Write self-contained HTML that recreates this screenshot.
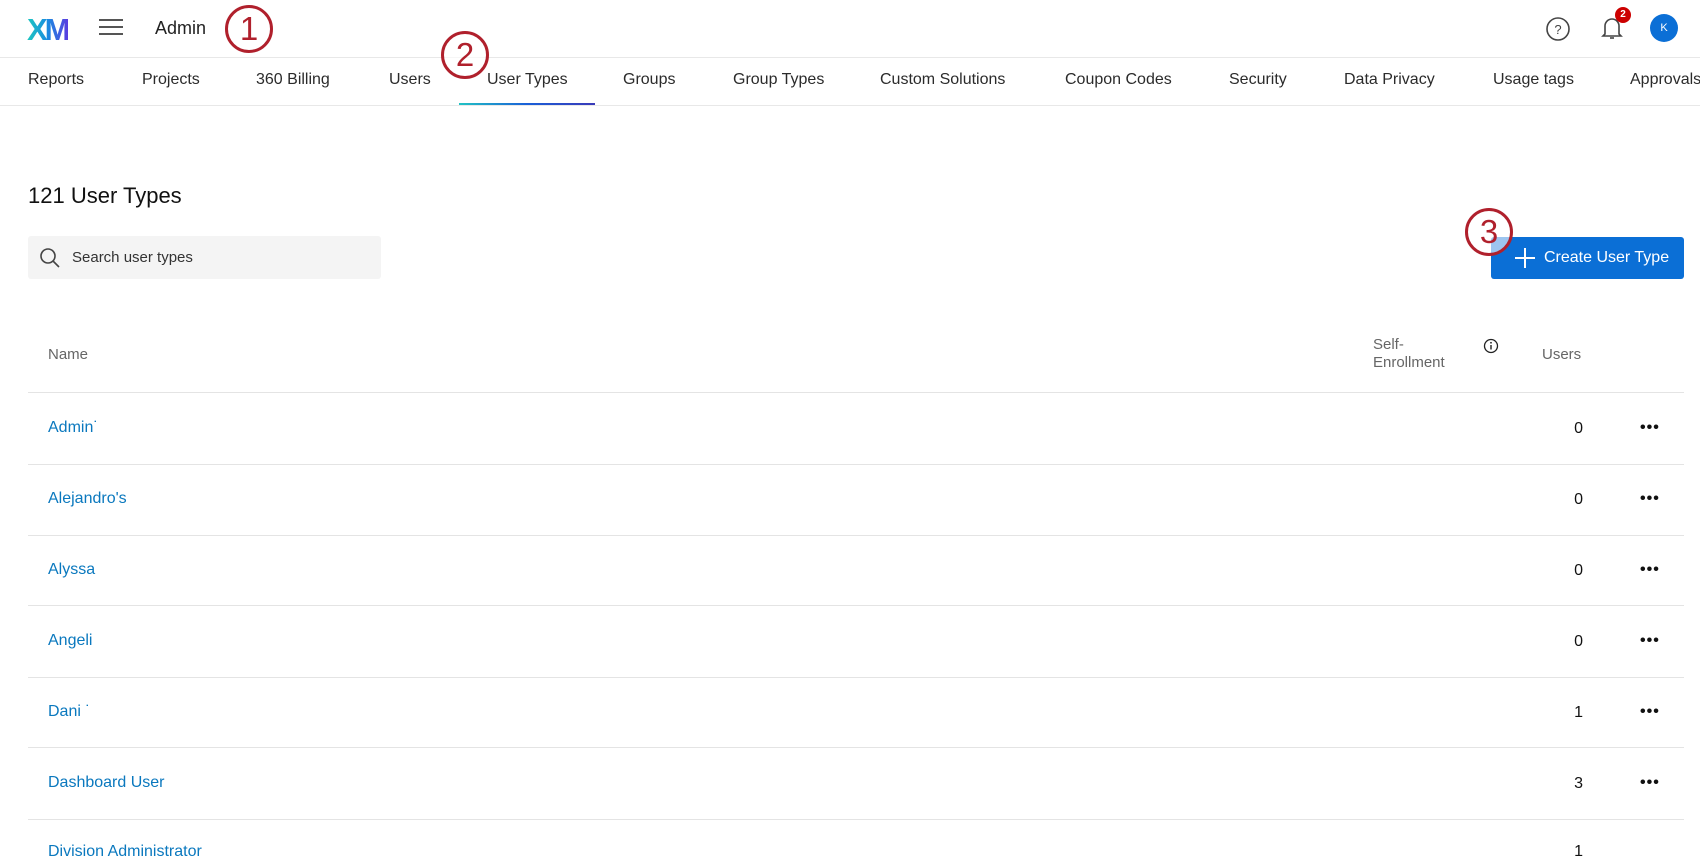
<!DOCTYPE html>
<html><head><meta charset="utf-8"><style>
*{margin:0;padding:0;box-sizing:border-box}
body{width:1700px;height:850px;overflow:hidden;background:#fff;font-family:"Liberation Sans",sans-serif;color:#1f1f1f;position:relative}
.a{position:absolute;white-space:nowrap}
.tab{position:absolute;top:71px;font-size:16px;color:#2b2b2b}
.hl{position:absolute;left:28px;width:1656px;height:1px;background:#e4e4e4}
.nm{position:absolute;left:48px;font-size:16px;color:#0a78be}
.num{position:absolute;right:117px;font-size:16px;color:#111}
.dots{position:absolute;left:1640px;font-size:16px;font-weight:bold;letter-spacing:1px;color:#111}
.circ{position:absolute;width:48px;height:48px;border:3px solid #b0202c;border-radius:50%;color:#b0202c;font-size:33px;text-align:center;line-height:42px;background:rgba(255,255,255,.6)}
</style></head><body>
<div class="a" style="left:27px;top:12px;font-size:31px;font-weight:bold;letter-spacing:-3px;background:linear-gradient(90deg,#1dc8c0,#1a8be0,#5a3de0);-webkit-background-clip:text;color:transparent">XM</div>
<div class="a" style="left:99px;top:19px;width:24px;height:2px;background:#555;box-shadow:0 7px 0 #555,0 14px 0 #555"></div>
<div class="a" style="left:155px;top:18px;font-size:18px;color:#222">Admin</div>
<div class="circ" style="left:225px;top:5px">1</div>
<svg class="a" style="left:1545px;top:16px" width="26" height="26" viewBox="0 0 26 26"><circle cx="13" cy="13" r="11" fill="none" stroke="#444" stroke-width="1.6"/><text x="13" y="18" font-size="13" text-anchor="middle" fill="#444" font-family="Liberation Sans">?</text></svg>
<svg class="a" style="left:1599px;top:14px" width="26" height="28" viewBox="0 0 26 28"><path d="M6 20V12a7 7 0 0 1 14 0v8l2 2H4z" fill="none" stroke="#444" stroke-width="1.6"/><path d="M11 24h4" stroke="#444" stroke-width="1.6"/></svg>
<div class="a" style="left:1615px;top:7px;width:16px;height:16px;border-radius:50%;background:#c00;color:#fff;font-size:10px;font-weight:bold;text-align:center;line-height:16px">2</div>
<div class="a" style="left:1650px;top:14px;width:28px;height:28px;border-radius:50%;background:#0b6fd6;color:#fff;font-size:11px;text-align:center;line-height:28px">K</div>
<div class="a" style="left:0;top:57px;width:1700px;height:1px;background:#e8e8e8"></div>
<div class="tab" style="left:28px">Reports</div>
<div class="tab" style="left:142px">Projects</div>
<div class="tab" style="left:256px">360 Billing</div>
<div class="tab" style="left:389px">Users</div>
<div class="tab" style="left:487px">User Types</div>
<div class="tab" style="left:623px">Groups</div>
<div class="tab" style="left:733px">Group Types</div>
<div class="tab" style="left:880px">Custom Solutions</div>
<div class="tab" style="left:1065px">Coupon Codes</div>
<div class="tab" style="left:1229px">Security</div>
<div class="tab" style="left:1344px">Data Privacy</div>
<div class="tab" style="left:1493px">Usage tags</div>
<div class="tab" style="left:1630px">Approvals</div>
<div class="a" style="left:459px;top:103px;width:136px;height:2px;background:linear-gradient(90deg,#21c3c4,#1a5fd8,#3a3ab8)"></div>
<div class="a" style="left:0;top:105px;width:1700px;height:1px;background:#e8e8e8"></div>
<div class="circ" style="left:441px;top:31px">2</div>
<div class="a" style="left:28px;top:183px;font-size:22px;color:#111">121 User Types</div>
<div class="a" style="left:28px;top:236px;width:353px;height:43px;background:#f4f4f4;border-radius:3px"></div>
<svg class="a" style="left:38px;top:246px" width="24" height="24" viewBox="0 0 24 24"><circle cx="10" cy="10" r="7" fill="none" stroke="#444" stroke-width="1.6"/><path d="M15 15l6 6" stroke="#444" stroke-width="1.6"/></svg>
<div class="a" style="left:72px;top:249px;font-size:15px;color:#333">Search user types</div>
<div class="a" style="left:1491px;top:237px;width:193px;height:42px;background:#0b6fd6;border-radius:3px;color:#fff;font-size:16px;line-height:42px;padding-left:53px">Create User Type</div>
<div class="a" style="left:1515px;top:248px;width:20px;height:2px;background:#fff;margin-top:9px"></div>
<div class="a" style="left:1524px;top:248px;width:2px;height:20px;background:#fff"></div>
<div class="circ" style="left:1465px;top:208px">3</div>
<div class="a" style="left:48px;top:346px;font-size:15px;color:#666">Name</div>
<div class="a" style="left:1373px;top:336px;font-size:15px;color:#666;line-height:18px;white-space:normal">Self-<br>Enrollment</div>
<svg class="a" style="left:1483px;top:338px" width="16" height="16" viewBox="0 0 16 16"><circle cx="8" cy="8" r="6.5" fill="none" stroke="#222" stroke-width="1.3"/><path d="M8 7v4.5" stroke="#222" stroke-width="1.4"/><circle cx="8" cy="4.8" r=".9" fill="#222"/></svg>
<div class="a" style="left:1542px;top:346px;font-size:15px;color:#666">Users</div>
<div class="hl" style="top:392px"></div>
<div class="hl" style="top:464px"></div>
<div class="hl" style="top:535px"></div>
<div class="hl" style="top:605px"></div>
<div class="hl" style="top:677px"></div>
<div class="hl" style="top:747px"></div>
<div class="hl" style="top:819px"></div>
<div class="nm" style="top:419px">Admin˙</div><div class="num" style="top:420px">0</div><div class="dots" style="top:419px">•••</div>
<div class="nm" style="top:490px">Alejandro's</div><div class="num" style="top:491px">0</div><div class="dots" style="top:490px">•••</div>
<div class="nm" style="top:561px">Alyssa</div><div class="num" style="top:562px">0</div><div class="dots" style="top:561px">•••</div>
<div class="nm" style="top:632px">Angeli</div><div class="num" style="top:633px">0</div><div class="dots" style="top:632px">•••</div>
<div class="nm" style="top:703px">Dani ˙</div><div class="num" style="top:704px">1</div><div class="dots" style="top:703px">•••</div>
<div class="nm" style="top:774px">Dashboard User</div><div class="num" style="top:775px">3</div><div class="dots" style="top:774px">•••</div>
<div class="nm" style="top:843px">Division Administrator</div><div class="num" style="top:843px">1</div>
</body></html>
